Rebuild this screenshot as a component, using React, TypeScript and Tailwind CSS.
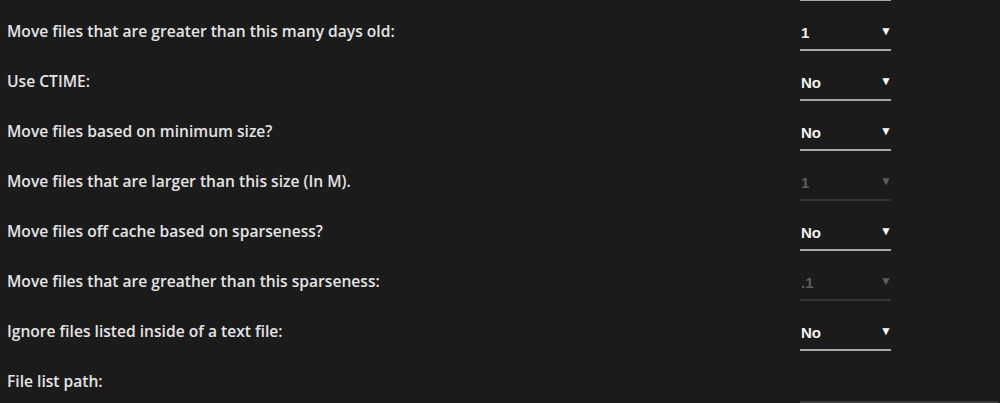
import type { ReactNode } from 'react';

type Row = {
  label: string;
  value?: string;
  disabled?: boolean;
  input?: boolean;
};

const ROWS: Row[] = [
  { label: 'Move files that are greater than this many days old:', value: '1' },
  { label: 'Use CTIME:', value: 'No' },
  { label: 'Move files based on minimum size?', value: 'No' },
  { label: 'Move files that are larger than this size (In M).', value: '1', disabled: true },
  { label: 'Move files off cache based on sparseness?', value: 'No' },
  { label: 'Move files that are greather than this sparseness:', value: '.1', disabled: true },
  { label: 'Ignore files listed inside of a text file:', value: 'No' },
  { label: 'File list path:', input: true },
];

function Select({ value, disabled }: { value: string; disabled?: boolean }) {
  return (
    <div
      className={`w-[91px] h-[38px] flex items-end justify-between pb-[9px] border-b-2 ${
        disabled ? 'border-[#333333] text-[#5e5e5e]' : 'border-[#a6a6a6] text-[#f2f2f2]'
      }`}
    >
      <span className="pl-px text-[15px] font-bold leading-none" style={{ fontFamily: '"Liberation Sans", Arial, sans-serif' }}>
        {value}
      </span>
      <span className={`-mr-px text-[12px] leading-none mb-[3px] ${disabled ? 'text-[#5e5e5e]' : 'text-white'}`}>▼</span>
    </div>
  );
}

function FieldRow({ label, children }: { label: string; children: ReactNode }) {
  return (
    <div className="h-[50px] flex items-end">
      <div className="w-[800px] pl-[7px] pb-[9px] text-[15.6px] leading-[22px] text-[#e4e4e4] font-semibold" style={{ fontFamily: '"Open Sans", "Noto Sans", sans-serif' }}>
        {label}
      </div>
      {children}
    </div>
  );
}

export default function App() {
  return (
    <div className="w-[1000px] h-[403px] overflow-hidden bg-[#1c1b1b]">
      <div className="h-[1px] flex">
        <div className="ml-[800px] w-[91px] border-b-2 border-[#a6a6a6] -mt-px" />
      </div>
      {ROWS.map((row) => (
        <FieldRow key={row.label} label={row.label}>
          {row.input ? (
            <div className="w-[198px] h-[40px] border-b-2 border-[#3a3a3a] -mb-[2px]" />
          ) : (
            <Select value={row.value ?? ''} disabled={row.disabled} />
          )}
        </FieldRow>
      ))}
    </div>
  );
}
